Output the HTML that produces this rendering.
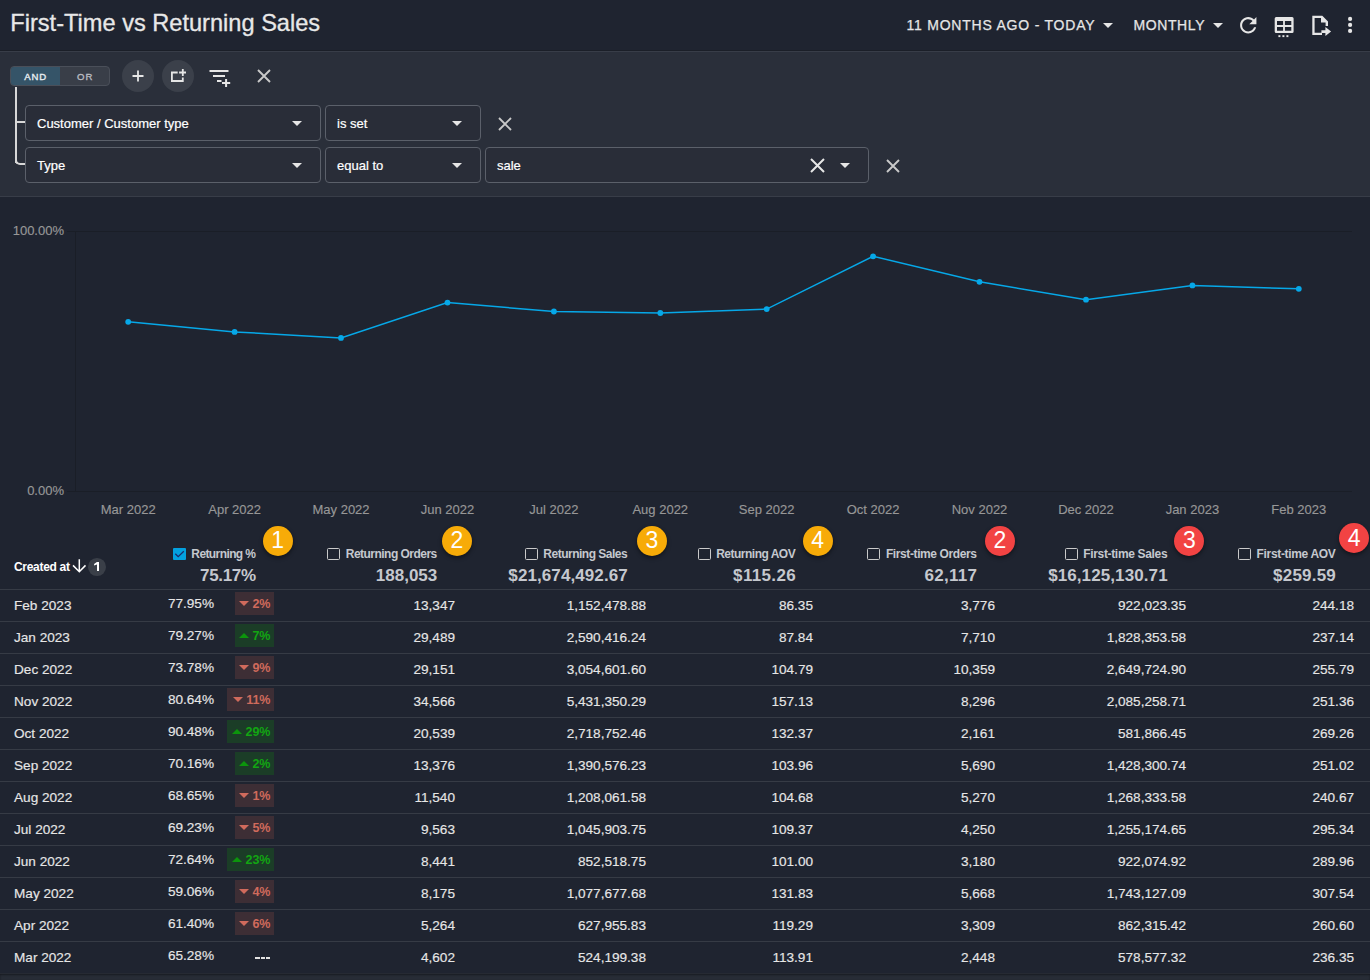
<!DOCTYPE html>
<html><head><meta charset="utf-8"><title>First-Time vs Returning Sales</title>
<style>
html,body{margin:0;padding:0;}
body{width:1370px;height:980px;position:relative;overflow:hidden;background:#272c36;font-family:"Liberation Sans", sans-serif;}
.a{position:absolute;}
.t{position:absolute;white-space:nowrap;}
svg.a{overflow:visible;}
</style></head><body>
<div class="a" style="left:0px;top:0px;width:1370px;height:50px;background:#1f2430"></div>
<div class="a" style="left:0px;top:50px;width:1370px;height:1px;background:#1b1f28"></div>
<div class="a" style="left:0px;top:51px;width:1370px;height:1px;background:#383d48"></div>
<div class="t" style="top:11.62px;font-size:23.6px;line-height:23.6px;font-weight:400;color:#e8e8e8;left:10.30px;-webkit-text-stroke:0.3px #e8e8e8;">First-Time vs Returning Sales</div>
<div class="t" style="top:18.35px;font-size:14px;line-height:14px;font-weight:500;color:#e6e6e6;letter-spacing:0.78px;left:906.50px;-webkit-text-stroke:0.25px #e6e6e6;">11 MONTHS AGO - TODAY</div>
<svg class="a" style="left:1103.2px;top:22.6px;" width="10" height="5" viewBox="0 0 10 5"><path d="M0 0H10L5 5Z" fill="#e6e6e6"/></svg>
<div class="t" style="top:18.35px;font-size:14px;line-height:14px;font-weight:500;color:#e6e6e6;letter-spacing:0.6px;left:1133.50px;-webkit-text-stroke:0.25px #e6e6e6;">MONTHLY</div>
<svg class="a" style="left:1213.2px;top:22.6px;" width="10" height="5" viewBox="0 0 10 5"><path d="M0 0H10L5 5Z" fill="#e6e6e6"/></svg>
<svg class="a" style="left:1236.3px;top:12.9px;" width="24.5" height="24.5" viewBox="0 0 24 24"><path fill="#e6e6e6" d="M17.65 6.35C16.2 4.9 14.21 4 12 4c-4.42 0-7.99 3.58-7.99 8s3.57 8 7.99 8c3.73 0 6.84-2.55 7.73-6h-2.08c-.82 2.33-3.04 4-5.65 4-3.31 0-6-2.69-6-6s2.69-6 6-6c1.66 0 3.14.69 4.22 1.78L13 11h7V4l-2.35 2.35z"/></svg>
<svg class="a" style="left:1274px;top:16px;" width="21" height="22" viewBox="0 0 21 22"><path fill="#e6e6e6" d="M2.2 0.9H18.1A1.5 1.5 0 0 1 19.6 2.4V15.5A1.5 1.5 0 0 1 18.1 17H2.2A1.5 1.5 0 0 1 0.7 15.5V2.4A1.5 1.5 0 0 1 2.2 0.9ZM3 4.9V9.1H9.1V4.9ZM10.9 4.9V9.1H17.3V4.9ZM3 10.9V14.7H9.1V10.9ZM10.9 10.9V14.7H17.3V10.9Z"/><rect x="4.4" y="19.2" width="2" height="1.9" fill="#e6e6e6"/><rect x="8.4" y="19.2" width="2" height="1.9" fill="#e6e6e6"/><rect x="12.4" y="19.2" width="2" height="1.9" fill="#e6e6e6"/></svg>
<svg class="a" style="left:1308px;top:12px;" width="28" height="28" viewBox="0 0 28 28"><path fill="#e6e6e6" d="M4.3 3.8H14.3L20 9.4V14H17.6V10.6H13V6H6.6V20.7H14V22.9H4.3Z"/><path fill="#e6e6e6" d="M13.4 18.3H17.4V15.1L23.1 19.6L17.4 24V20.9H13.4Z"/></svg>
<svg class="a" style="left:1345px;top:14px;" width="10" height="22" viewBox="0 0 10 22"><circle cx="5.1" cy="4.9" r="2.1" fill="#e6e6e6"/><circle cx="5.1" cy="10.9" r="2.1" fill="#e6e6e6"/><circle cx="5.1" cy="16.9" r="2.1" fill="#e6e6e6"/></svg>
<div class="a" style="left:0px;top:52px;width:1370px;height:144px;background:#2a2f3a"></div>
<div class="a" style="left:0px;top:196px;width:1370px;height:1px;background:#383d48"></div>
<div class="a" style="left:10px;top:66px;width:100px;height:20px;box-sizing:border-box;border:1px solid #4a4f59;border-radius:4px;background:#393e48;overflow:hidden"></div>
<div class="a" style="left:11px;top:67px;width:49px;height:18px;background:#355468;border-radius:3px 0 0 3px"></div>
<div class="t" style="top:71.87px;font-size:9.6px;line-height:9.6px;font-weight:400;color:#e8eef2;letter-spacing:0.9px;left:-264.40px;width:600px;text-align:center;-webkit-text-stroke:0.35px #e8eef2;">AND</div>
<div class="t" style="top:71.87px;font-size:9.6px;line-height:9.6px;font-weight:400;color:#b9bcc2;letter-spacing:0.9px;left:-214.80px;width:600px;text-align:center;-webkit-text-stroke:0.35px #b9bcc2;">OR</div>
<div class="a" style="left:15px;top:87px;width:2px;height:76px;background:#d8d8d8"></div>
<div class="a" style="left:15px;top:121px;width:10px;height:2px;background:#d8d8d8"></div>
<div class="a" style="left:15px;top:157px;width:10px;height:8px;box-sizing:border-box;border-left:2px solid #d8d8d8;border-bottom:2px solid #d8d8d8;border-bottom-left-radius:5px"></div>
<div class="a" style="left:122px;top:60px;width:32px;height:32px;border-radius:50%;background:#3b404a"></div>
<svg class="a" style="left:132px;top:70px;" width="12" height="12" viewBox="0 0 12 12"><path d="M6 0.5V11.5M0.5 6H11.5" stroke="#e6e6e6" stroke-width="1.8"/></svg>
<div class="a" style="left:162px;top:60px;width:32px;height:32px;border-radius:50%;background:#3b404a"></div>
<svg class="a" style="left:164px;top:62px;" width="28" height="28" viewBox="0 0 28 28"><path d="M13.7 10.5H7.9V19H18.8V15.6" fill="none" stroke="#e6e6e6" stroke-width="1.8"/><path d="M18.8 6.9V14M15.1 10.5H22" stroke="#e6e6e6" stroke-width="1.8"/></svg>
<svg class="a" style="left:209px;top:69px;" width="23" height="19" viewBox="0 0 23 19"><path d="M0.5 2H19.5M4 7H16M8 12H12.5" stroke="#e6e6e6" stroke-width="1.9"/><path d="M17.1 10V18M13 14H21.2" stroke="#e6e6e6" stroke-width="2"/></svg>
<svg class="a" style="left:257px;top:69px;" width="14" height="14" viewBox="0 0 14 14"><path d="M1 1L13 13M13 1L1 13" stroke="#c9c9c9" stroke-width="1.9"/></svg>
<div class="a" style="left:25px;top:105px;width:296px;height:36px;box-sizing:border-box;border:1px solid #5b606a;border-radius:4px;background:#292d38"></div>
<div class="t" style="top:117.00px;font-size:13px;line-height:13px;font-weight:400;color:#ffffff;left:37.00px;-webkit-text-stroke:0.2px #ffffff;">Customer / Customer type</div>
<svg class="a" style="left:292.0px;top:121px;" width="10" height="5" viewBox="0 0 10 5"><path d="M0 0H10L5 5Z" fill="#e6e6e6"/></svg>
<div class="a" style="left:325px;top:105px;width:156px;height:36px;box-sizing:border-box;border:1px solid #5b606a;border-radius:4px;background:#292d38"></div>
<div class="t" style="top:117.00px;font-size:13px;line-height:13px;font-weight:400;color:#ffffff;left:337.00px;-webkit-text-stroke:0.2px #ffffff;">is set</div>
<svg class="a" style="left:452.0px;top:121px;" width="10" height="5" viewBox="0 0 10 5"><path d="M0 0H10L5 5Z" fill="#e6e6e6"/></svg>
<svg class="a" style="left:498px;top:117px;" width="14" height="14" viewBox="0 0 14 14"><path d="M1 1L13 13M13 1L1 13" stroke="#c9c9c9" stroke-width="1.9"/></svg>
<div class="a" style="left:25px;top:147px;width:296px;height:36px;box-sizing:border-box;border:1px solid #5b606a;border-radius:4px;background:#292d38"></div>
<div class="t" style="top:159.00px;font-size:13px;line-height:13px;font-weight:400;color:#ffffff;left:37.00px;-webkit-text-stroke:0.2px #ffffff;">Type</div>
<svg class="a" style="left:292.0px;top:163px;" width="10" height="5" viewBox="0 0 10 5"><path d="M0 0H10L5 5Z" fill="#e6e6e6"/></svg>
<div class="a" style="left:325px;top:147px;width:156px;height:36px;box-sizing:border-box;border:1px solid #5b606a;border-radius:4px;background:#292d38"></div>
<div class="t" style="top:159.00px;font-size:13px;line-height:13px;font-weight:400;color:#ffffff;left:337.00px;-webkit-text-stroke:0.2px #ffffff;">equal to</div>
<svg class="a" style="left:452.0px;top:163px;" width="10" height="5" viewBox="0 0 10 5"><path d="M0 0H10L5 5Z" fill="#e6e6e6"/></svg>
<div class="a" style="left:485px;top:147px;width:384px;height:36px;box-sizing:border-box;border:1px solid #5b606a;border-radius:4px;background:#292d38"></div>
<div class="t" style="top:159.00px;font-size:13px;line-height:13px;font-weight:400;color:#ffffff;left:497.00px;-webkit-text-stroke:0.2px #ffffff;">sale</div>
<svg class="a" style="left:840.0px;top:163px;" width="10" height="5" viewBox="0 0 10 5"><path d="M0 0H10L5 5Z" fill="#e6e6e6"/></svg>
<svg class="a" style="left:810px;top:158px;" width="15" height="15" viewBox="0 0 15 15"><path d="M1 1L14 14M14 1L1 14" stroke="#e6e6e6" stroke-width="2"/></svg>
<svg class="a" style="left:886px;top:159px;" width="14" height="14" viewBox="0 0 14 14"><path d="M1 1L13 13M13 1L1 13" stroke="#c9c9c9" stroke-width="1.9"/></svg>
<div class="a" style="left:0px;top:197px;width:1370px;height:777px;background:#1f2430"></div>
<div class="t" style="top:224.00px;font-size:13px;line-height:13px;font-weight:400;color:#979797;right:1306.00px;-webkit-text-stroke:0.15px #979797;">100.00%</div>
<div class="t" style="top:484.00px;font-size:13px;line-height:13px;font-weight:400;color:#979797;right:1306.00px;-webkit-text-stroke:0.15px #979797;">0.00%</div>
<svg class="a" style="left:0px;top:0px;" width="1370" height="540" viewBox="0 0 1370 540"><path d="M67 231.5H1352M67 491.5H1352M75.5 231V491" stroke="#1a1e27" stroke-width="1"/><polyline fill="none" stroke="#06a8e8" stroke-width="1.5" points="128.2,321.8 234.6,331.9 341.0,337.9 447.5,302.6 553.9,311.5 660.3,313.0 766.7,309.1 873.1,256.3 979.5,281.8 1086.0,299.7 1192.4,285.4 1298.8,288.8"/><circle cx="128.2" cy="321.8" r="2.9" fill="#06a8e8"/><circle cx="234.6" cy="331.9" r="2.9" fill="#06a8e8"/><circle cx="341.0" cy="337.9" r="2.9" fill="#06a8e8"/><circle cx="447.5" cy="302.6" r="2.9" fill="#06a8e8"/><circle cx="553.9" cy="311.5" r="2.9" fill="#06a8e8"/><circle cx="660.3" cy="313.0" r="2.9" fill="#06a8e8"/><circle cx="766.7" cy="309.1" r="2.9" fill="#06a8e8"/><circle cx="873.1" cy="256.3" r="2.9" fill="#06a8e8"/><circle cx="979.5" cy="281.8" r="2.9" fill="#06a8e8"/><circle cx="1086.0" cy="299.7" r="2.9" fill="#06a8e8"/><circle cx="1192.4" cy="285.4" r="2.9" fill="#06a8e8"/><circle cx="1298.8" cy="288.8" r="2.9" fill="#06a8e8"/></svg>
<div class="t" style="top:503.00px;font-size:13px;line-height:13px;font-weight:400;color:#979797;left:-171.79px;width:600px;text-align:center;-webkit-text-stroke:0.15px #979797;">Mar 2022</div>
<div class="t" style="top:503.00px;font-size:13px;line-height:13px;font-weight:400;color:#979797;left:-65.38px;width:600px;text-align:center;-webkit-text-stroke:0.15px #979797;">Apr 2022</div>
<div class="t" style="top:503.00px;font-size:13px;line-height:13px;font-weight:400;color:#979797;left:41.04px;width:600px;text-align:center;-webkit-text-stroke:0.15px #979797;">May 2022</div>
<div class="t" style="top:503.00px;font-size:13px;line-height:13px;font-weight:400;color:#979797;left:147.46px;width:600px;text-align:center;-webkit-text-stroke:0.15px #979797;">Jun 2022</div>
<div class="t" style="top:503.00px;font-size:13px;line-height:13px;font-weight:400;color:#979797;left:253.88px;width:600px;text-align:center;-webkit-text-stroke:0.15px #979797;">Jul 2022</div>
<div class="t" style="top:503.00px;font-size:13px;line-height:13px;font-weight:400;color:#979797;left:360.29px;width:600px;text-align:center;-webkit-text-stroke:0.15px #979797;">Aug 2022</div>
<div class="t" style="top:503.00px;font-size:13px;line-height:13px;font-weight:400;color:#979797;left:466.71px;width:600px;text-align:center;-webkit-text-stroke:0.15px #979797;">Sep 2022</div>
<div class="t" style="top:503.00px;font-size:13px;line-height:13px;font-weight:400;color:#979797;left:573.12px;width:600px;text-align:center;-webkit-text-stroke:0.15px #979797;">Oct 2022</div>
<div class="t" style="top:503.00px;font-size:13px;line-height:13px;font-weight:400;color:#979797;left:679.54px;width:600px;text-align:center;-webkit-text-stroke:0.15px #979797;">Nov 2022</div>
<div class="t" style="top:503.00px;font-size:13px;line-height:13px;font-weight:400;color:#979797;left:785.96px;width:600px;text-align:center;-webkit-text-stroke:0.15px #979797;">Dec 2022</div>
<div class="t" style="top:503.00px;font-size:13px;line-height:13px;font-weight:400;color:#979797;left:892.38px;width:600px;text-align:center;-webkit-text-stroke:0.15px #979797;">Jan 2023</div>
<div class="t" style="top:503.00px;font-size:13px;line-height:13px;font-weight:400;color:#979797;left:998.79px;width:600px;text-align:center;-webkit-text-stroke:0.15px #979797;">Feb 2023</div>
<div class="a" style="left:0px;top:589px;width:1370px;height:1px;background:#363b45"></div>
<div class="t" style="top:560.84px;font-size:12px;line-height:12px;font-weight:700;color:#ffffff;letter-spacing:-0.3px;left:14.00px;">Created at</div>
<svg class="a" style="left:72px;top:558.2px;" width="14" height="15" viewBox="0 0 14 15"><path d="M7.3 1.2V13.2M1 7.4L7.3 13.7L13.5 7.4" fill="none" stroke="#ffffff" stroke-width="1.5"/></svg>
<div class="a" style="left:88.1px;top:558.2px;width:17.8px;height:17.8px;border-radius:50%;background:#3a3f48"></div>
<svg class="a" style="left:88px;top:558px;" width="18" height="18" viewBox="0 0 18 18"><path d="M8.9 4H11V13H9V6.6L6.1 7.6V5.9Z" fill="#ffffff"/></svg>
<div class="t" style="top:547.84px;font-size:12px;line-height:12px;font-weight:700;color:#c5c8ce;letter-spacing:-0.6px;right:1114.60px;">Returning %</div>
<div class="a" style="left:172.9px;top:547.8px;width:12.8px;height:12.2px;background:#03a1df;border-radius:1px"></div>
<svg class="a" style="left:172.9px;top:547.8px;" width="12.8" height="12.2" viewBox="0 0 12.8 12.2"><path d="M2.3 5.7L5.2 8.7L10.8 3.3" fill="none" stroke="#1b2a6b" stroke-width="1.3"/></svg>
<div class="t" style="top:566.61px;font-size:17px;line-height:17px;font-weight:700;color:#c5c8ce;letter-spacing:-0.35px;right:1114.35px;">75.17%</div>
<div class="a" style="left:262.7px;top:525.5px;width:30px;height:30px;border-radius:50%;background:#f7ab08;box-shadow:0 2px 4px rgba(0,0,0,0.45)"></div>
<div class="t" style="top:529.33px;font-size:23px;line-height:23px;font-weight:400;color:#ffffff;left:-22.30px;width:600px;text-align:center;">1</div>
<div class="t" style="top:547.84px;font-size:12px;line-height:12px;font-weight:700;color:#c5c8ce;letter-spacing:-0.52px;right:933.22px;">Returning Orders</div>
<div class="a" style="left:326.9px;top:547.8px;width:12.8px;height:12.2px;box-sizing:border-box;border:1.6px solid #cacaca;border-radius:1.5px"></div>
<div class="t" style="top:566.61px;font-size:17px;line-height:17px;font-weight:700;color:#c5c8ce;letter-spacing:0.03px;right:932.67px;">188,053</div>
<div class="a" style="left:442px;top:525.5px;width:30px;height:30px;border-radius:50%;background:#f7ab08;box-shadow:0 2px 4px rgba(0,0,0,0.45)"></div>
<div class="t" style="top:529.33px;font-size:23px;line-height:23px;font-weight:400;color:#ffffff;left:157.00px;width:600px;text-align:center;">2</div>
<div class="t" style="top:547.84px;font-size:12px;line-height:12px;font-weight:700;color:#c5c8ce;letter-spacing:-0.5px;right:742.80px;">Returning Sales</div>
<div class="a" style="left:524.9px;top:547.8px;width:12.8px;height:12.2px;box-sizing:border-box;border:1.6px solid #cacaca;border-radius:1.5px"></div>
<div class="t" style="top:566.61px;font-size:17px;line-height:17px;font-weight:700;color:#c5c8ce;letter-spacing:0.09px;right:742.21px;">$21,674,492.67</div>
<div class="a" style="left:637px;top:525.5px;width:30px;height:30px;border-radius:50%;background:#f7ab08;box-shadow:0 2px 4px rgba(0,0,0,0.45)"></div>
<div class="t" style="top:529.33px;font-size:23px;line-height:23px;font-weight:400;color:#ffffff;left:352.00px;width:600px;text-align:center;">3</div>
<div class="t" style="top:547.84px;font-size:12px;line-height:12px;font-weight:700;color:#c5c8ce;letter-spacing:-0.5px;right:574.80px;">Returning AOV</div>
<div class="a" style="left:697.9px;top:547.8px;width:12.8px;height:12.2px;box-sizing:border-box;border:1.6px solid #cacaca;border-radius:1.5px"></div>
<div class="t" style="top:566.61px;font-size:17px;line-height:17px;font-weight:700;color:#c5c8ce;letter-spacing:0.35px;right:573.95px;">$115.26</div>
<div class="a" style="left:802.7px;top:525.5px;width:30px;height:30px;border-radius:50%;background:#f7ab08;box-shadow:0 2px 4px rgba(0,0,0,0.45)"></div>
<div class="t" style="top:529.33px;font-size:23px;line-height:23px;font-weight:400;color:#ffffff;left:517.70px;width:600px;text-align:center;">4</div>
<div class="t" style="top:547.84px;font-size:12px;line-height:12px;font-weight:700;color:#c5c8ce;letter-spacing:-0.4px;right:393.50px;">First-time Orders</div>
<div class="a" style="left:866.9px;top:547.8px;width:12.8px;height:12.2px;box-sizing:border-box;border:1.6px solid #cacaca;border-radius:1.5px"></div>
<div class="t" style="top:566.61px;font-size:17px;line-height:17px;font-weight:700;color:#c5c8ce;letter-spacing:0.25px;right:392.85px;">62,117</div>
<div class="a" style="left:985px;top:525.5px;width:30px;height:30px;border-radius:50%;background:#f24343;box-shadow:0 2px 4px rgba(0,0,0,0.45)"></div>
<div class="t" style="top:529.33px;font-size:23px;line-height:23px;font-weight:400;color:#ffffff;left:700.00px;width:600px;text-align:center;">2</div>
<div class="t" style="top:547.84px;font-size:12px;line-height:12px;font-weight:700;color:#c5c8ce;letter-spacing:-0.33px;right:202.73px;">First-time Sales</div>
<div class="a" style="left:1064.9px;top:547.8px;width:12.8px;height:12.2px;box-sizing:border-box;border:1.6px solid #cacaca;border-radius:1.5px"></div>
<div class="t" style="top:566.61px;font-size:17px;line-height:17px;font-weight:700;color:#c5c8ce;letter-spacing:0.1px;right:202.30px;">$16,125,130.71</div>
<div class="a" style="left:1174.4px;top:525.5px;width:30px;height:30px;border-radius:50%;background:#f24343;box-shadow:0 2px 4px rgba(0,0,0,0.45)"></div>
<div class="t" style="top:529.33px;font-size:23px;line-height:23px;font-weight:400;color:#ffffff;left:889.40px;width:600px;text-align:center;">3</div>
<div class="t" style="top:547.84px;font-size:12px;line-height:12px;font-weight:700;color:#c5c8ce;letter-spacing:-0.33px;right:34.53px;">First-time AOV</div>
<div class="a" style="left:1237.9px;top:547.8px;width:12.8px;height:12.2px;box-sizing:border-box;border:1.6px solid #cacaca;border-radius:1.5px"></div>
<div class="t" style="top:566.61px;font-size:17px;line-height:17px;font-weight:700;color:#c5c8ce;letter-spacing:0.22px;right:33.98px;">$259.59</div>
<div class="a" style="left:1339.2px;top:523.4px;width:30px;height:30px;border-radius:50%;background:#f24343;box-shadow:0 2px 4px rgba(0,0,0,0.45)"></div>
<div class="t" style="top:527.23px;font-size:23px;line-height:23px;font-weight:400;color:#ffffff;left:1054.20px;width:600px;text-align:center;">4</div>
<div class="t" style="top:599.29px;font-size:13.6px;line-height:13.6px;font-weight:400;color:#e6e6e6;left:14.00px;-webkit-text-stroke:0.15px #e6e6e6;">Feb 2023</div>
<div class="t" style="top:597.29px;font-size:13.6px;line-height:13.6px;font-weight:400;color:#e6e6e6;right:1156.00px;-webkit-text-stroke:0.15px #e6e6e6;">77.95%</div>
<div class="a" style="left:235px;top:592px;width:39px;height:23px;background:#3d2e35"></div>
<div class="t" style="top:598.22px;font-size:12.5px;line-height:12.5px;font-weight:700;color:#d06a5c;right:1099.50px;">2%</div>
<svg class="a" style="left:239.0px;top:601px;" width="10" height="5" viewBox="0 0 10 5"><path d="M0 0H10L5 5Z" fill="#d06a5c"/></svg>
<div class="t" style="top:599.29px;font-size:13.6px;line-height:13.6px;font-weight:400;color:#e6e6e6;right:915.00px;-webkit-text-stroke:0.15px #e6e6e6;">13,347</div>
<div class="t" style="top:599.29px;font-size:13.6px;line-height:13.6px;font-weight:400;color:#e6e6e6;right:724.00px;-webkit-text-stroke:0.15px #e6e6e6;">1,152,478.88</div>
<div class="t" style="top:599.29px;font-size:13.6px;line-height:13.6px;font-weight:400;color:#e6e6e6;right:557.00px;-webkit-text-stroke:0.15px #e6e6e6;">86.35</div>
<div class="t" style="top:599.29px;font-size:13.6px;line-height:13.6px;font-weight:400;color:#e6e6e6;right:375.00px;-webkit-text-stroke:0.15px #e6e6e6;">3,776</div>
<div class="t" style="top:599.29px;font-size:13.6px;line-height:13.6px;font-weight:400;color:#e6e6e6;right:184.00px;-webkit-text-stroke:0.15px #e6e6e6;">922,023.35</div>
<div class="t" style="top:599.29px;font-size:13.6px;line-height:13.6px;font-weight:400;color:#e6e6e6;right:16.00px;-webkit-text-stroke:0.15px #e6e6e6;">244.18</div>
<div class="a" style="left:0px;top:621px;width:1370px;height:1px;background:#363b45"></div>
<div class="t" style="top:631.29px;font-size:13.6px;line-height:13.6px;font-weight:400;color:#e6e6e6;left:14.00px;-webkit-text-stroke:0.15px #e6e6e6;">Jan 2023</div>
<div class="t" style="top:629.29px;font-size:13.6px;line-height:13.6px;font-weight:400;color:#e6e6e6;right:1156.00px;-webkit-text-stroke:0.15px #e6e6e6;">79.27%</div>
<div class="a" style="left:235px;top:624px;width:39px;height:23px;background:#1b3d27"></div>
<div class="t" style="top:630.22px;font-size:12.5px;line-height:12.5px;font-weight:700;color:#12a512;right:1099.50px;">7%</div>
<svg class="a" style="left:239.0px;top:633px;" width="10" height="5" viewBox="0 0 10 5"><path d="M0 5H10L5 0Z" fill="#0c950c"/></svg>
<div class="t" style="top:631.29px;font-size:13.6px;line-height:13.6px;font-weight:400;color:#e6e6e6;right:915.00px;-webkit-text-stroke:0.15px #e6e6e6;">29,489</div>
<div class="t" style="top:631.29px;font-size:13.6px;line-height:13.6px;font-weight:400;color:#e6e6e6;right:724.00px;-webkit-text-stroke:0.15px #e6e6e6;">2,590,416.24</div>
<div class="t" style="top:631.29px;font-size:13.6px;line-height:13.6px;font-weight:400;color:#e6e6e6;right:557.00px;-webkit-text-stroke:0.15px #e6e6e6;">87.84</div>
<div class="t" style="top:631.29px;font-size:13.6px;line-height:13.6px;font-weight:400;color:#e6e6e6;right:375.00px;-webkit-text-stroke:0.15px #e6e6e6;">7,710</div>
<div class="t" style="top:631.29px;font-size:13.6px;line-height:13.6px;font-weight:400;color:#e6e6e6;right:184.00px;-webkit-text-stroke:0.15px #e6e6e6;">1,828,353.58</div>
<div class="t" style="top:631.29px;font-size:13.6px;line-height:13.6px;font-weight:400;color:#e6e6e6;right:16.00px;-webkit-text-stroke:0.15px #e6e6e6;">237.14</div>
<div class="a" style="left:0px;top:653px;width:1370px;height:1px;background:#363b45"></div>
<div class="t" style="top:663.29px;font-size:13.6px;line-height:13.6px;font-weight:400;color:#e6e6e6;left:14.00px;-webkit-text-stroke:0.15px #e6e6e6;">Dec 2022</div>
<div class="t" style="top:661.29px;font-size:13.6px;line-height:13.6px;font-weight:400;color:#e6e6e6;right:1156.00px;-webkit-text-stroke:0.15px #e6e6e6;">73.78%</div>
<div class="a" style="left:235px;top:656px;width:39px;height:23px;background:#3d2e35"></div>
<div class="t" style="top:662.22px;font-size:12.5px;line-height:12.5px;font-weight:700;color:#d06a5c;right:1099.50px;">9%</div>
<svg class="a" style="left:239.0px;top:665px;" width="10" height="5" viewBox="0 0 10 5"><path d="M0 0H10L5 5Z" fill="#d06a5c"/></svg>
<div class="t" style="top:663.29px;font-size:13.6px;line-height:13.6px;font-weight:400;color:#e6e6e6;right:915.00px;-webkit-text-stroke:0.15px #e6e6e6;">29,151</div>
<div class="t" style="top:663.29px;font-size:13.6px;line-height:13.6px;font-weight:400;color:#e6e6e6;right:724.00px;-webkit-text-stroke:0.15px #e6e6e6;">3,054,601.60</div>
<div class="t" style="top:663.29px;font-size:13.6px;line-height:13.6px;font-weight:400;color:#e6e6e6;right:557.00px;-webkit-text-stroke:0.15px #e6e6e6;">104.79</div>
<div class="t" style="top:663.29px;font-size:13.6px;line-height:13.6px;font-weight:400;color:#e6e6e6;right:375.00px;-webkit-text-stroke:0.15px #e6e6e6;">10,359</div>
<div class="t" style="top:663.29px;font-size:13.6px;line-height:13.6px;font-weight:400;color:#e6e6e6;right:184.00px;-webkit-text-stroke:0.15px #e6e6e6;">2,649,724.90</div>
<div class="t" style="top:663.29px;font-size:13.6px;line-height:13.6px;font-weight:400;color:#e6e6e6;right:16.00px;-webkit-text-stroke:0.15px #e6e6e6;">255.79</div>
<div class="a" style="left:0px;top:685px;width:1370px;height:1px;background:#363b45"></div>
<div class="t" style="top:695.29px;font-size:13.6px;line-height:13.6px;font-weight:400;color:#e6e6e6;left:14.00px;-webkit-text-stroke:0.15px #e6e6e6;">Nov 2022</div>
<div class="t" style="top:693.29px;font-size:13.6px;line-height:13.6px;font-weight:400;color:#e6e6e6;right:1156.00px;-webkit-text-stroke:0.15px #e6e6e6;">80.64%</div>
<div class="a" style="left:227px;top:688px;width:47px;height:23px;background:#3d2e35"></div>
<div class="t" style="top:694.22px;font-size:12.5px;line-height:12.5px;font-weight:700;color:#d06a5c;right:1099.50px;">11%</div>
<svg class="a" style="left:233.0px;top:697px;" width="10" height="5" viewBox="0 0 10 5"><path d="M0 0H10L5 5Z" fill="#d06a5c"/></svg>
<div class="t" style="top:695.29px;font-size:13.6px;line-height:13.6px;font-weight:400;color:#e6e6e6;right:915.00px;-webkit-text-stroke:0.15px #e6e6e6;">34,566</div>
<div class="t" style="top:695.29px;font-size:13.6px;line-height:13.6px;font-weight:400;color:#e6e6e6;right:724.00px;-webkit-text-stroke:0.15px #e6e6e6;">5,431,350.29</div>
<div class="t" style="top:695.29px;font-size:13.6px;line-height:13.6px;font-weight:400;color:#e6e6e6;right:557.00px;-webkit-text-stroke:0.15px #e6e6e6;">157.13</div>
<div class="t" style="top:695.29px;font-size:13.6px;line-height:13.6px;font-weight:400;color:#e6e6e6;right:375.00px;-webkit-text-stroke:0.15px #e6e6e6;">8,296</div>
<div class="t" style="top:695.29px;font-size:13.6px;line-height:13.6px;font-weight:400;color:#e6e6e6;right:184.00px;-webkit-text-stroke:0.15px #e6e6e6;">2,085,258.71</div>
<div class="t" style="top:695.29px;font-size:13.6px;line-height:13.6px;font-weight:400;color:#e6e6e6;right:16.00px;-webkit-text-stroke:0.15px #e6e6e6;">251.36</div>
<div class="a" style="left:0px;top:717px;width:1370px;height:1px;background:#363b45"></div>
<div class="t" style="top:727.29px;font-size:13.6px;line-height:13.6px;font-weight:400;color:#e6e6e6;left:14.00px;-webkit-text-stroke:0.15px #e6e6e6;">Oct 2022</div>
<div class="t" style="top:725.29px;font-size:13.6px;line-height:13.6px;font-weight:400;color:#e6e6e6;right:1156.00px;-webkit-text-stroke:0.15px #e6e6e6;">90.48%</div>
<div class="a" style="left:227px;top:720px;width:47px;height:23px;background:#1b3d27"></div>
<div class="t" style="top:726.22px;font-size:12.5px;line-height:12.5px;font-weight:700;color:#12a512;right:1099.50px;">29%</div>
<svg class="a" style="left:232.0px;top:729px;" width="10" height="5" viewBox="0 0 10 5"><path d="M0 5H10L5 0Z" fill="#0c950c"/></svg>
<div class="t" style="top:727.29px;font-size:13.6px;line-height:13.6px;font-weight:400;color:#e6e6e6;right:915.00px;-webkit-text-stroke:0.15px #e6e6e6;">20,539</div>
<div class="t" style="top:727.29px;font-size:13.6px;line-height:13.6px;font-weight:400;color:#e6e6e6;right:724.00px;-webkit-text-stroke:0.15px #e6e6e6;">2,718,752.46</div>
<div class="t" style="top:727.29px;font-size:13.6px;line-height:13.6px;font-weight:400;color:#e6e6e6;right:557.00px;-webkit-text-stroke:0.15px #e6e6e6;">132.37</div>
<div class="t" style="top:727.29px;font-size:13.6px;line-height:13.6px;font-weight:400;color:#e6e6e6;right:375.00px;-webkit-text-stroke:0.15px #e6e6e6;">2,161</div>
<div class="t" style="top:727.29px;font-size:13.6px;line-height:13.6px;font-weight:400;color:#e6e6e6;right:184.00px;-webkit-text-stroke:0.15px #e6e6e6;">581,866.45</div>
<div class="t" style="top:727.29px;font-size:13.6px;line-height:13.6px;font-weight:400;color:#e6e6e6;right:16.00px;-webkit-text-stroke:0.15px #e6e6e6;">269.26</div>
<div class="a" style="left:0px;top:749px;width:1370px;height:1px;background:#363b45"></div>
<div class="t" style="top:759.29px;font-size:13.6px;line-height:13.6px;font-weight:400;color:#e6e6e6;left:14.00px;-webkit-text-stroke:0.15px #e6e6e6;">Sep 2022</div>
<div class="t" style="top:757.29px;font-size:13.6px;line-height:13.6px;font-weight:400;color:#e6e6e6;right:1156.00px;-webkit-text-stroke:0.15px #e6e6e6;">70.16%</div>
<div class="a" style="left:235px;top:752px;width:39px;height:23px;background:#1b3d27"></div>
<div class="t" style="top:758.22px;font-size:12.5px;line-height:12.5px;font-weight:700;color:#12a512;right:1099.50px;">2%</div>
<svg class="a" style="left:239.0px;top:761px;" width="10" height="5" viewBox="0 0 10 5"><path d="M0 5H10L5 0Z" fill="#0c950c"/></svg>
<div class="t" style="top:759.29px;font-size:13.6px;line-height:13.6px;font-weight:400;color:#e6e6e6;right:915.00px;-webkit-text-stroke:0.15px #e6e6e6;">13,376</div>
<div class="t" style="top:759.29px;font-size:13.6px;line-height:13.6px;font-weight:400;color:#e6e6e6;right:724.00px;-webkit-text-stroke:0.15px #e6e6e6;">1,390,576.23</div>
<div class="t" style="top:759.29px;font-size:13.6px;line-height:13.6px;font-weight:400;color:#e6e6e6;right:557.00px;-webkit-text-stroke:0.15px #e6e6e6;">103.96</div>
<div class="t" style="top:759.29px;font-size:13.6px;line-height:13.6px;font-weight:400;color:#e6e6e6;right:375.00px;-webkit-text-stroke:0.15px #e6e6e6;">5,690</div>
<div class="t" style="top:759.29px;font-size:13.6px;line-height:13.6px;font-weight:400;color:#e6e6e6;right:184.00px;-webkit-text-stroke:0.15px #e6e6e6;">1,428,300.74</div>
<div class="t" style="top:759.29px;font-size:13.6px;line-height:13.6px;font-weight:400;color:#e6e6e6;right:16.00px;-webkit-text-stroke:0.15px #e6e6e6;">251.02</div>
<div class="a" style="left:0px;top:781px;width:1370px;height:1px;background:#363b45"></div>
<div class="t" style="top:791.29px;font-size:13.6px;line-height:13.6px;font-weight:400;color:#e6e6e6;left:14.00px;-webkit-text-stroke:0.15px #e6e6e6;">Aug 2022</div>
<div class="t" style="top:789.29px;font-size:13.6px;line-height:13.6px;font-weight:400;color:#e6e6e6;right:1156.00px;-webkit-text-stroke:0.15px #e6e6e6;">68.65%</div>
<div class="a" style="left:235px;top:784px;width:39px;height:23px;background:#3d2e35"></div>
<div class="t" style="top:790.22px;font-size:12.5px;line-height:12.5px;font-weight:700;color:#d06a5c;right:1099.50px;">1%</div>
<svg class="a" style="left:239.0px;top:793px;" width="10" height="5" viewBox="0 0 10 5"><path d="M0 0H10L5 5Z" fill="#d06a5c"/></svg>
<div class="t" style="top:791.29px;font-size:13.6px;line-height:13.6px;font-weight:400;color:#e6e6e6;right:915.00px;-webkit-text-stroke:0.15px #e6e6e6;">11,540</div>
<div class="t" style="top:791.29px;font-size:13.6px;line-height:13.6px;font-weight:400;color:#e6e6e6;right:724.00px;-webkit-text-stroke:0.15px #e6e6e6;">1,208,061.58</div>
<div class="t" style="top:791.29px;font-size:13.6px;line-height:13.6px;font-weight:400;color:#e6e6e6;right:557.00px;-webkit-text-stroke:0.15px #e6e6e6;">104.68</div>
<div class="t" style="top:791.29px;font-size:13.6px;line-height:13.6px;font-weight:400;color:#e6e6e6;right:375.00px;-webkit-text-stroke:0.15px #e6e6e6;">5,270</div>
<div class="t" style="top:791.29px;font-size:13.6px;line-height:13.6px;font-weight:400;color:#e6e6e6;right:184.00px;-webkit-text-stroke:0.15px #e6e6e6;">1,268,333.58</div>
<div class="t" style="top:791.29px;font-size:13.6px;line-height:13.6px;font-weight:400;color:#e6e6e6;right:16.00px;-webkit-text-stroke:0.15px #e6e6e6;">240.67</div>
<div class="a" style="left:0px;top:813px;width:1370px;height:1px;background:#363b45"></div>
<div class="t" style="top:823.29px;font-size:13.6px;line-height:13.6px;font-weight:400;color:#e6e6e6;left:14.00px;-webkit-text-stroke:0.15px #e6e6e6;">Jul 2022</div>
<div class="t" style="top:821.29px;font-size:13.6px;line-height:13.6px;font-weight:400;color:#e6e6e6;right:1156.00px;-webkit-text-stroke:0.15px #e6e6e6;">69.23%</div>
<div class="a" style="left:235px;top:816px;width:39px;height:23px;background:#3d2e35"></div>
<div class="t" style="top:822.22px;font-size:12.5px;line-height:12.5px;font-weight:700;color:#d06a5c;right:1099.50px;">5%</div>
<svg class="a" style="left:239.0px;top:825px;" width="10" height="5" viewBox="0 0 10 5"><path d="M0 0H10L5 5Z" fill="#d06a5c"/></svg>
<div class="t" style="top:823.29px;font-size:13.6px;line-height:13.6px;font-weight:400;color:#e6e6e6;right:915.00px;-webkit-text-stroke:0.15px #e6e6e6;">9,563</div>
<div class="t" style="top:823.29px;font-size:13.6px;line-height:13.6px;font-weight:400;color:#e6e6e6;right:724.00px;-webkit-text-stroke:0.15px #e6e6e6;">1,045,903.75</div>
<div class="t" style="top:823.29px;font-size:13.6px;line-height:13.6px;font-weight:400;color:#e6e6e6;right:557.00px;-webkit-text-stroke:0.15px #e6e6e6;">109.37</div>
<div class="t" style="top:823.29px;font-size:13.6px;line-height:13.6px;font-weight:400;color:#e6e6e6;right:375.00px;-webkit-text-stroke:0.15px #e6e6e6;">4,250</div>
<div class="t" style="top:823.29px;font-size:13.6px;line-height:13.6px;font-weight:400;color:#e6e6e6;right:184.00px;-webkit-text-stroke:0.15px #e6e6e6;">1,255,174.65</div>
<div class="t" style="top:823.29px;font-size:13.6px;line-height:13.6px;font-weight:400;color:#e6e6e6;right:16.00px;-webkit-text-stroke:0.15px #e6e6e6;">295.34</div>
<div class="a" style="left:0px;top:845px;width:1370px;height:1px;background:#363b45"></div>
<div class="t" style="top:855.29px;font-size:13.6px;line-height:13.6px;font-weight:400;color:#e6e6e6;left:14.00px;-webkit-text-stroke:0.15px #e6e6e6;">Jun 2022</div>
<div class="t" style="top:853.29px;font-size:13.6px;line-height:13.6px;font-weight:400;color:#e6e6e6;right:1156.00px;-webkit-text-stroke:0.15px #e6e6e6;">72.64%</div>
<div class="a" style="left:227px;top:848px;width:47px;height:23px;background:#1b3d27"></div>
<div class="t" style="top:854.22px;font-size:12.5px;line-height:12.5px;font-weight:700;color:#12a512;right:1099.50px;">23%</div>
<svg class="a" style="left:232.0px;top:857px;" width="10" height="5" viewBox="0 0 10 5"><path d="M0 5H10L5 0Z" fill="#0c950c"/></svg>
<div class="t" style="top:855.29px;font-size:13.6px;line-height:13.6px;font-weight:400;color:#e6e6e6;right:915.00px;-webkit-text-stroke:0.15px #e6e6e6;">8,441</div>
<div class="t" style="top:855.29px;font-size:13.6px;line-height:13.6px;font-weight:400;color:#e6e6e6;right:724.00px;-webkit-text-stroke:0.15px #e6e6e6;">852,518.75</div>
<div class="t" style="top:855.29px;font-size:13.6px;line-height:13.6px;font-weight:400;color:#e6e6e6;right:557.00px;-webkit-text-stroke:0.15px #e6e6e6;">101.00</div>
<div class="t" style="top:855.29px;font-size:13.6px;line-height:13.6px;font-weight:400;color:#e6e6e6;right:375.00px;-webkit-text-stroke:0.15px #e6e6e6;">3,180</div>
<div class="t" style="top:855.29px;font-size:13.6px;line-height:13.6px;font-weight:400;color:#e6e6e6;right:184.00px;-webkit-text-stroke:0.15px #e6e6e6;">922,074.92</div>
<div class="t" style="top:855.29px;font-size:13.6px;line-height:13.6px;font-weight:400;color:#e6e6e6;right:16.00px;-webkit-text-stroke:0.15px #e6e6e6;">289.96</div>
<div class="a" style="left:0px;top:877px;width:1370px;height:1px;background:#363b45"></div>
<div class="t" style="top:887.29px;font-size:13.6px;line-height:13.6px;font-weight:400;color:#e6e6e6;left:14.00px;-webkit-text-stroke:0.15px #e6e6e6;">May 2022</div>
<div class="t" style="top:885.29px;font-size:13.6px;line-height:13.6px;font-weight:400;color:#e6e6e6;right:1156.00px;-webkit-text-stroke:0.15px #e6e6e6;">59.06%</div>
<div class="a" style="left:235px;top:880px;width:39px;height:23px;background:#3d2e35"></div>
<div class="t" style="top:886.22px;font-size:12.5px;line-height:12.5px;font-weight:700;color:#d06a5c;right:1099.50px;">4%</div>
<svg class="a" style="left:239.0px;top:889px;" width="10" height="5" viewBox="0 0 10 5"><path d="M0 0H10L5 5Z" fill="#d06a5c"/></svg>
<div class="t" style="top:887.29px;font-size:13.6px;line-height:13.6px;font-weight:400;color:#e6e6e6;right:915.00px;-webkit-text-stroke:0.15px #e6e6e6;">8,175</div>
<div class="t" style="top:887.29px;font-size:13.6px;line-height:13.6px;font-weight:400;color:#e6e6e6;right:724.00px;-webkit-text-stroke:0.15px #e6e6e6;">1,077,677.68</div>
<div class="t" style="top:887.29px;font-size:13.6px;line-height:13.6px;font-weight:400;color:#e6e6e6;right:557.00px;-webkit-text-stroke:0.15px #e6e6e6;">131.83</div>
<div class="t" style="top:887.29px;font-size:13.6px;line-height:13.6px;font-weight:400;color:#e6e6e6;right:375.00px;-webkit-text-stroke:0.15px #e6e6e6;">5,668</div>
<div class="t" style="top:887.29px;font-size:13.6px;line-height:13.6px;font-weight:400;color:#e6e6e6;right:184.00px;-webkit-text-stroke:0.15px #e6e6e6;">1,743,127.09</div>
<div class="t" style="top:887.29px;font-size:13.6px;line-height:13.6px;font-weight:400;color:#e6e6e6;right:16.00px;-webkit-text-stroke:0.15px #e6e6e6;">307.54</div>
<div class="a" style="left:0px;top:909px;width:1370px;height:1px;background:#363b45"></div>
<div class="t" style="top:919.29px;font-size:13.6px;line-height:13.6px;font-weight:400;color:#e6e6e6;left:14.00px;-webkit-text-stroke:0.15px #e6e6e6;">Apr 2022</div>
<div class="t" style="top:917.29px;font-size:13.6px;line-height:13.6px;font-weight:400;color:#e6e6e6;right:1156.00px;-webkit-text-stroke:0.15px #e6e6e6;">61.40%</div>
<div class="a" style="left:235px;top:912px;width:39px;height:23px;background:#3d2e35"></div>
<div class="t" style="top:918.22px;font-size:12.5px;line-height:12.5px;font-weight:700;color:#d06a5c;right:1099.50px;">6%</div>
<svg class="a" style="left:239.0px;top:921px;" width="10" height="5" viewBox="0 0 10 5"><path d="M0 0H10L5 5Z" fill="#d06a5c"/></svg>
<div class="t" style="top:919.29px;font-size:13.6px;line-height:13.6px;font-weight:400;color:#e6e6e6;right:915.00px;-webkit-text-stroke:0.15px #e6e6e6;">5,264</div>
<div class="t" style="top:919.29px;font-size:13.6px;line-height:13.6px;font-weight:400;color:#e6e6e6;right:724.00px;-webkit-text-stroke:0.15px #e6e6e6;">627,955.83</div>
<div class="t" style="top:919.29px;font-size:13.6px;line-height:13.6px;font-weight:400;color:#e6e6e6;right:557.00px;-webkit-text-stroke:0.15px #e6e6e6;">119.29</div>
<div class="t" style="top:919.29px;font-size:13.6px;line-height:13.6px;font-weight:400;color:#e6e6e6;right:375.00px;-webkit-text-stroke:0.15px #e6e6e6;">3,309</div>
<div class="t" style="top:919.29px;font-size:13.6px;line-height:13.6px;font-weight:400;color:#e6e6e6;right:184.00px;-webkit-text-stroke:0.15px #e6e6e6;">862,315.42</div>
<div class="t" style="top:919.29px;font-size:13.6px;line-height:13.6px;font-weight:400;color:#e6e6e6;right:16.00px;-webkit-text-stroke:0.15px #e6e6e6;">260.60</div>
<div class="a" style="left:0px;top:941px;width:1370px;height:1px;background:#363b45"></div>
<div class="t" style="top:951.29px;font-size:13.6px;line-height:13.6px;font-weight:400;color:#e6e6e6;left:14.00px;-webkit-text-stroke:0.15px #e6e6e6;">Mar 2022</div>
<div class="t" style="top:949.29px;font-size:13.6px;line-height:13.6px;font-weight:400;color:#e6e6e6;right:1156.00px;-webkit-text-stroke:0.15px #e6e6e6;">65.28%</div>
<div class="a" style="left:255.4px;top:957px;width:4.4px;height:2px;background:#e2e2e2"></div>
<div class="a" style="left:261px;top:957px;width:4px;height:2px;background:#e2e2e2"></div>
<div class="a" style="left:266px;top:957px;width:4px;height:2px;background:#e2e2e2"></div>
<div class="t" style="top:951.29px;font-size:13.6px;line-height:13.6px;font-weight:400;color:#e6e6e6;right:915.00px;-webkit-text-stroke:0.15px #e6e6e6;">4,602</div>
<div class="t" style="top:951.29px;font-size:13.6px;line-height:13.6px;font-weight:400;color:#e6e6e6;right:724.00px;-webkit-text-stroke:0.15px #e6e6e6;">524,199.38</div>
<div class="t" style="top:951.29px;font-size:13.6px;line-height:13.6px;font-weight:400;color:#e6e6e6;right:557.00px;-webkit-text-stroke:0.15px #e6e6e6;">113.91</div>
<div class="t" style="top:951.29px;font-size:13.6px;line-height:13.6px;font-weight:400;color:#e6e6e6;right:375.00px;-webkit-text-stroke:0.15px #e6e6e6;">2,448</div>
<div class="t" style="top:951.29px;font-size:13.6px;line-height:13.6px;font-weight:400;color:#e6e6e6;right:184.00px;-webkit-text-stroke:0.15px #e6e6e6;">578,577.32</div>
<div class="t" style="top:951.29px;font-size:13.6px;line-height:13.6px;font-weight:400;color:#e6e6e6;right:16.00px;-webkit-text-stroke:0.15px #e6e6e6;">236.35</div>
<div class="a" style="left:0px;top:973px;width:1370px;height:1px;background:#262a33"></div>
<div class="a" style="left:0px;top:974px;width:1370px;height:6px;background:#272c36;box-shadow:inset 0 1px 2px rgba(0,0,0,0.4)"></div>
</body></html>
